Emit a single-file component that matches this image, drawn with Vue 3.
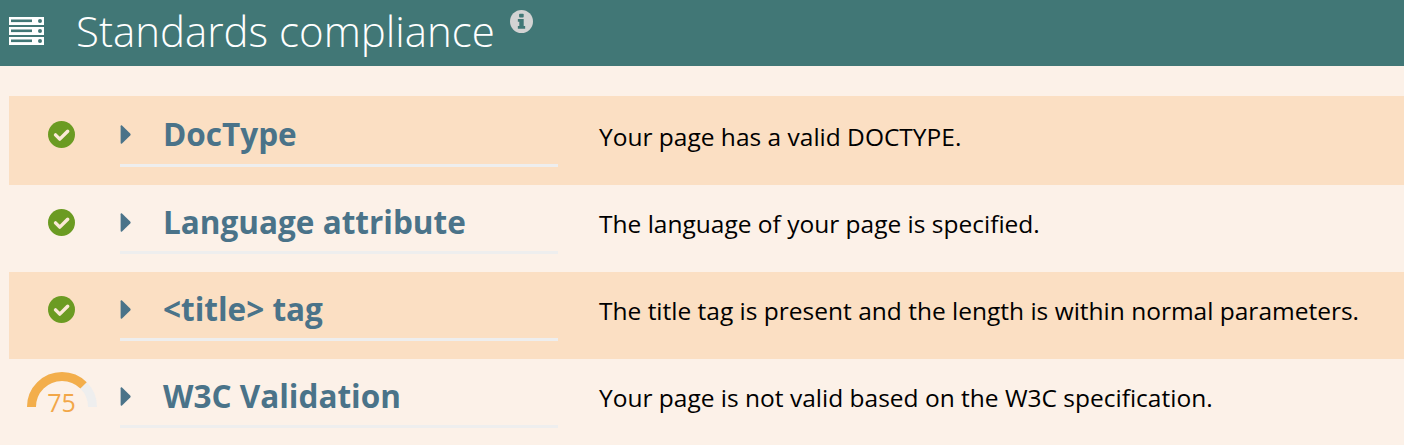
<script setup>
const rows = [
  { title: 'DocType', text: 'Your page has a valid DOCTYPE.', score: null },
  { title: 'Language attribute', text: 'The language of your page is specified.', score: null },
  { title: '<title> tag', text: 'The title tag is present and the length is within normal parameters.', score: null },
  { title: 'W3C Validation', text: 'Your page is not valid based on the W3C specification.', score: 75 },
]
</script>

<template>
  <div class="page">
    <header class="bar">
      <svg class="server" width="35" height="28" viewBox="0 0 35 28">
        <g v-for="y in [0, 10, 20]" :key="y">
          <rect x="0" :y="y" width="35" height="8" fill="#fff" />
          <rect x="2" :y="y + 2.5" width="21" height="2.6" fill="#417776" />
          <circle cx="31" :cy="y + 4" r="2" fill="#417776" />
        </g>
      </svg>
      <h1 class="heading">Standards compliance</h1>
      <svg class="info" width="23" height="23" viewBox="0 0 22 22">
        <circle cx="11" cy="11" r="11" fill="#d3d3d3" />
        <rect x="8.7" y="3.5" width="4.4" height="3.6" rx="0.8" fill="#417776" />
        <path d="M7.5 8.6h5.6v6.7h1.4v2.6H7.5v-2.6h1.4v-4.1H7.5z" fill="#417776" />
      </svg>
    </header>
    <div class="list">
      <div v-for="(row, i) in rows" :key="row.title" class="row" :class="{ odd: i % 2 === 0 }">
        <div class="status">
          <svg v-if="row.score === null" width="27" height="27" viewBox="0 0 28 28">
            <circle cx="14" cy="14" r="14" fill="#6b9b22" />
            <path d="M7.8 14.4l4.4 4.4 8.2-8.2" fill="none" stroke="#fbe9d6" stroke-width="3.6" stroke-linecap="round" stroke-linejoin="round" />
          </svg>
          <div v-else class="gauge">
            <svg width="70" height="35" viewBox="0 0 70 35">
              <path d="M4.5 35a30.500 30.500 0 0 1 61 0" fill="none" stroke="#eeeeee" stroke-width="9" pathLength="100" />
              <path d="M4.5 35a30.500 30.500 0 0 1 61 0" fill="none" stroke="#f3ae4b" stroke-width="9" pathLength="100" stroke-dasharray="75 100" />
            </svg>
            <span class="score">{{ row.score }}</span>
          </div>
        </div>
        <div class="name">
          <svg class="caret" width="11" height="19" viewBox="0 0 11 19">
            <path d="M0.600 1.200C0.600 0.300 1.400 0 2 0.500L10.200 8.500C10.800 9.100 10.800 9.900 10.200 10.500L2 18.500C1.400 19 0.600 18.700 0.600 17.800z" fill="#4a7389" />
          </svg>
          <span class="title">{{ row.title }}</span>
        </div>
        <p class="desc">{{ row.text }}</p>
      </div>
    </div>
  </div>
</template>

<style>
html, body { margin: 0; background: #fcf1e8; }
</style>

<style scoped>
.page {
  width: 1404px;
  height: 445px;
  overflow: hidden;
  background: #fcf1e8;
  font-family: "Open Sans", sans-serif;
}
.bar {
  height: 66px;
  background: #417776;
  display: flex;
  align-items: flex-start;
}
.server { margin: 17px 0 0 9px; flex: none; }
.heading {
  margin: 2px 0 0 32px;
  font-size: 42px;
  line-height: 57px;
  font-weight: 300;
  color: #fff;
}
.info { margin: 10px 0 0 15px; }
.list { padding: 30px 0 0 9px; }
.row {
  height: 87px;
  display: grid;
  grid-template-columns: 111px 438px 1fr;
}
.row:first-child { height: 89px; }
.row.odd { background: #fbdfc3; }
.status { position: relative; padding: 25px 0 0 39px; }
.row:not(:first-child) .status { padding-top: 24px; }
.gauge { position: relative; margin: -11px 0 0 -21px; width: 70px; height: 35px; }
.score {
  position: absolute;
  left: -1px;
  right: 0;
  top: 13px;
  text-align: center;
  font-size: 25px;
  line-height: 34px;
  font-weight: 400;
  color: #f2a748;
}
.name {
  display: flex;
  align-items: flex-start;
  border-bottom: 3px solid #eeeeee;
  box-sizing: border-box;
  height: 71px;
}
.row:not(:first-child) .name { height: 69px; }
.caret { margin: 29px 0 0 0; flex: none; }
.row:not(:first-child) .caret { margin-top: 28px; }
.title {
  margin: 17px 0 0 32px;
  font-size: 31.5px;
  line-height: 42px;
  font-weight: 700;
  color: #4a7389;
}
.row:not(:first-child) .title { margin-top: 16px; }
.desc {
  margin: 0 0 0 41px;
  padding-top: 24px;
  font-size: 24.5px;
  line-height: 34px;
  color: #000;
  white-space: nowrap;
}
.row:not(:first-child) .desc { padding-top: 22px; }
</style>
